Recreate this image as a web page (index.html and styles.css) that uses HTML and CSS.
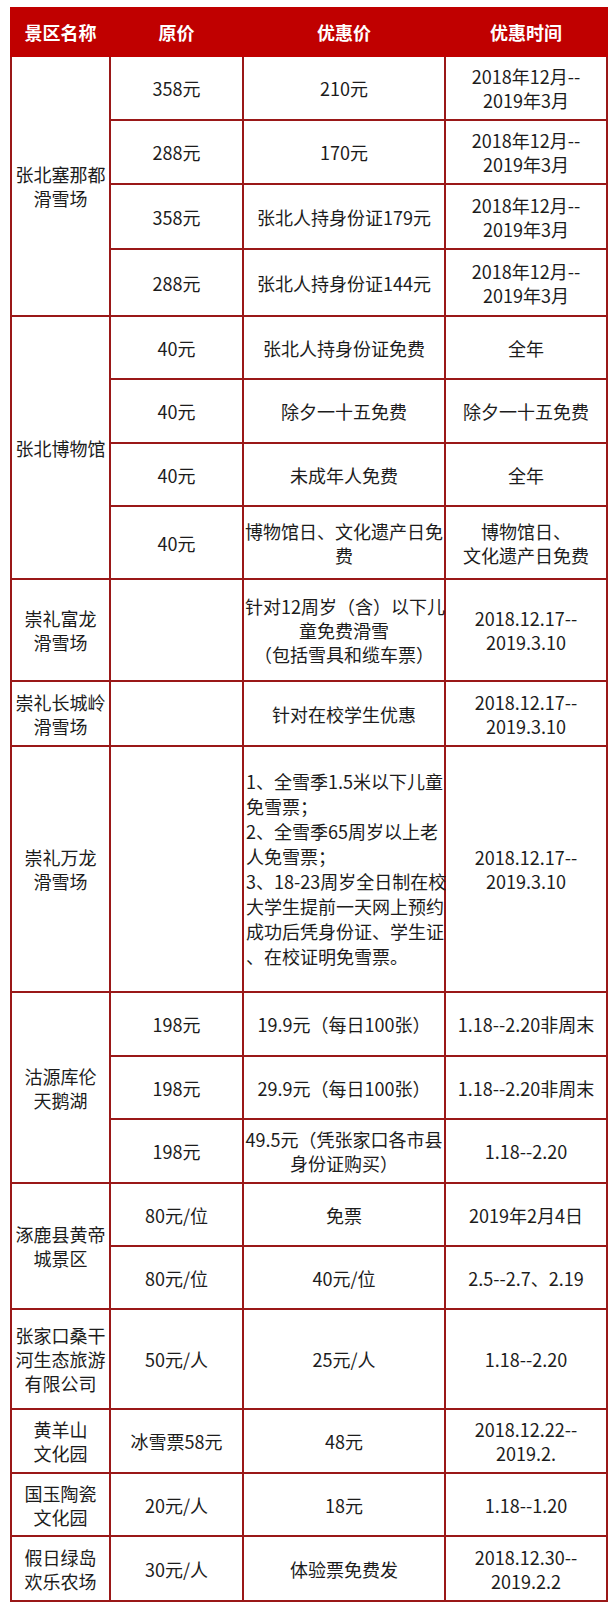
FILE: index.html
```html
<!DOCTYPE html>
<html lang="zh-CN">
<head>
<meta charset="utf-8">
<title>张家口景区优惠</title>
<link rel="stylesheet" href="styles.css">
</head>
<body>
<table class="deals">
  <colgroup>
    <col class="c-name">
    <col class="c-orig">
    <col class="c-deal">
    <col class="c-time">
  </colgroup>
  <thead>
    <tr class="h48">
      <th>景区名称</th>
      <th>原价</th>
      <th>优惠价</th>
      <th>优惠时间</th>
    </tr>
  </thead>
  <tbody>
    <tr class="h64">
      <td rowspan="4">张北塞那都<br>滑雪场</td>
      <td>358元</td>
      <td>210元</td>
      <td>2018年12月--<br>2019年3月</td>
    </tr>
    <tr class="h64">
      <td>288元</td>
      <td>170元</td>
      <td>2018年12月--<br>2019年3月</td>
    </tr>
    <tr class="h65">
      <td>358元</td>
      <td>张北人持身份证179元</td>
      <td>2018年12月--<br>2019年3月</td>
    </tr>
    <tr class="h67">
      <td>288元</td>
      <td>张北人持身份证144元</td>
      <td>2018年12月--<br>2019年3月</td>
    </tr>

    <tr class="h63">
      <td rowspan="4">张北博物馆</td>
      <td>40元</td>
      <td>张北人持身份证免费</td>
      <td>全年</td>
    </tr>
    <tr class="h64">
      <td>40元</td>
      <td>除夕一十五免费</td>
      <td>除夕一十五免费</td>
    </tr>
    <tr class="h63">
      <td>40元</td>
      <td>未成年人免费</td>
      <td>全年</td>
    </tr>
    <tr class="h73">
      <td>40元</td>
      <td>博物馆日、文化遗产日免<br>费</td>
      <td>博物馆日、<br>文化遗产日免费</td>
    </tr>

    <tr class="h102">
      <td>崇礼富龙<br>滑雪场</td>
      <td></td>
      <td>针对12周岁（含）以下儿<br>童免费滑雪<br>（包括雪具和缆车票）</td>
      <td>2018.12.17--<br>2019.3.10</td>
    </tr>
    <tr class="h65">
      <td>崇礼长城岭<br>滑雪场</td>
      <td></td>
      <td>针对在校学生优惠</td>
      <td>2018.12.17--<br>2019.3.10</td>
    </tr>
    <tr class="h246">
      <td>崇礼万龙<br>滑雪场</td>
      <td></td>
      <td class="list">1、全雪季1.5米以下儿童<br>免雪票；<br>2、全雪季65周岁以上老<br>人免雪票；<br>3、18-23周岁全日制在校<br>大学生提前一天网上预约<br>成功后凭身份证、学生证<br>、在校证明免雪票。</td>
      <td>2018.12.17--<br>2019.3.10</td>
    </tr>

    <tr class="h64">
      <td rowspan="3">沽源库伦<br>天鹅湖</td>
      <td>198元</td>
      <td>19.9元（每日100张）</td>
      <td>1.18--2.20非周末</td>
    </tr>
    <tr class="h63">
      <td>198元</td>
      <td>29.9元（每日100张）</td>
      <td>1.18--2.20非周末</td>
    </tr>
    <tr class="h64">
      <td>198元</td>
      <td>49.5元（凭张家口各市县<br>身份证购买）</td>
      <td>1.18--2.20</td>
    </tr>

    <tr class="h63">
      <td rowspan="2">涿鹿县黄帝<br>城景区</td>
      <td>80元/位</td>
      <td>免票</td>
      <td>2019年2月4日</td>
    </tr>
    <tr class="h63">
      <td>80元/位</td>
      <td>40元/位</td>
      <td>2.5--2.7、2.19</td>
    </tr>

    <tr class="h100">
      <td>张家口桑干<br>河生态旅游<br>有限公司</td>
      <td>50元/人</td>
      <td>25元/人</td>
      <td>1.18--2.20</td>
    </tr>
    <tr class="h64">
      <td>黄羊山<br>文化园</td>
      <td>冰雪票58元</td>
      <td>48元</td>
      <td>2018.12.22--<br>2019.2.</td>
    </tr>
    <tr class="h63">
      <td>国玉陶瓷<br>文化园</td>
      <td>20元/人</td>
      <td>18元</td>
      <td>1.18--1.20</td>
    </tr>
    <tr class="h65">
      <td>假日绿岛<br>欢乐农场</td>
      <td>30元/人</td>
      <td>体验票免费发</td>
      <td>2018.12.30--<br>2019.2.2</td>
    </tr>
  </tbody>
</table>
</body>
</html>
```
FILE: styles.css
```css
html, body {
  margin: 0;
  padding: 0;
  background: #ffffff;
}

body {
  padding: 7px 0 0 10px;
  font-family: "Noto Sans CJK SC", "Microsoft YaHei", sans-serif;
  color: #1c1c1c;
}

.deals {
  width: 596px;
  border-collapse: collapse;
  table-layout: fixed;
  font-size: 18px;
  line-height: 24px;
}

.c-name { width: 99px; }
.c-orig { width: 133px; }
.c-deal { width: 202px; }
.c-time { width: 162px; }

.deals th {
  background: #c00000;
  color: #ffffff;
  font-weight: 700;
  border: 2px solid #c00000;
  padding: 0;
  text-align: center;
  vertical-align: middle;
}

.deals td {
  border: 2px solid #9a1818;
  padding: 0 1px;
  text-align: center;
  vertical-align: middle;
  white-space: nowrap;
}

.deals td.list {
  text-align: left;
  line-height: 25px;
  padding: 0 0 0 2px;
}

.h48 { height: 48px; }
.h63 { height: 63px; }
.h64 { height: 64px; }
.h65 { height: 65px; }
.h67 { height: 67px; }
.h73 { height: 73px; }
.h100 { height: 100px; }
.h102 { height: 102px; }
.h246 { height: 246px; }
```
